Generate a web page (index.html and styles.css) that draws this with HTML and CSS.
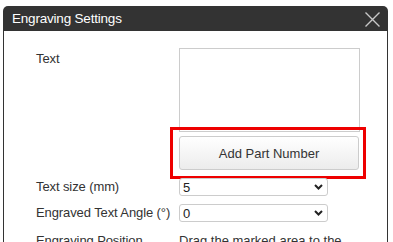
FILE: index.html
```html
<!DOCTYPE html>
<html lang="en">
  <head>
    <meta charset="UTF-8" />
    <title>Engraving Settings</title>
    <link rel="stylesheet" href="styles.css">
  </head>
  <body>
    <div class="dialog">
      <!-- title bar -->
      <div class="dialog-title">
        <span>Engraving Settings</span>
        <svg class="close" width="15" height="15" viewBox="0 0 15 15">
          <path d="M0.5 0.5 L14.5 14.5 M14.5 0.5 L0.5 14.5" stroke="#c8c8c8" stroke-width="1.4" fill="none" />
        </svg>
      </div>

      <div class="dialog-body">
        <div class="row row-top">
          <label class="label">Text</label>
          <div class="field">
            <textarea class="text-input"></textarea>
            <div class="btn-wrap">
              <button class="btn">Add Part Number</button>
              <div class="highlight"></div>
            </div>
          </div>
        </div>

        <div class="row">
          <label class="label">Text size (mm)</label>
          <div class="select-wrap">
            <select class="select"><option>5</option></select>
            <svg class="chevron" width="9" height="6" viewBox="0 0 9 6">
              <path d="M1 1 L4.5 4.5 L8 1" stroke="#222" stroke-width="2" fill="none" />
            </svg>
          </div>
        </div>

        <div class="row">
          <label class="label">Engraved Text Angle (°)</label>
          <div class="select-wrap">
            <select class="select"><option>0</option></select>
            <svg class="chevron" width="9" height="6" viewBox="0 0 9 6">
              <path d="M1 1 L4.5 4.5 L8 1" stroke="#222" stroke-width="2" fill="none" />
            </svg>
          </div>
        </div>

        <div class="row row-top">
          <label class="label">Engraving Position</label>
          <p class="hint">Drag the marked area to the desired position on the part.</p>
        </div>
      </div>
    </div>
  </body>
</html>
```

FILE: styles.css
```css
body {
  margin: 0;
  background: #ffffff;
  font-family: "Liberation Sans", Arial, sans-serif;
  font-size: 13px;
  color: #333333;
}

/* dialog frame */
.dialog {
  margin: 6px 0 0 3px;
  width: 385px;
}

.dialog-title {
  height: 25px;
  background: #333333;
  border-radius: 5px 5px 0 0;
  color: #ffffff;
  display: flex;
  align-items: center;
  justify-content: space-between;
  padding: 0 8px 0 9px;
}

.dialog-title span {
  font-size: 13.5px;
  letter-spacing: -0.2px;
}

.close {
  display: block;
  margin-top: 1px;
}

.dialog-body {
  border-left: 1px solid #333333;
  border-right: 1px solid #333333;
  padding: 17px 28px 20px 32px;
  display: flex;
  flex-direction: column;
  gap: 8px;
}

/* form rows */
.row {
  display: grid;
  grid-template-columns: 143px 181px;
  align-items: center;
}

.row-top {
  align-items: start;
}

.label {
  line-height: 18px;
  white-space: nowrap;
  letter-spacing: -0.1px;
}

.row-top .label {
  margin-top: 2px;
}

.field {
  display: flex;
  flex-direction: column;
  gap: 4px;
}

.text-input {
  display: block;
  box-sizing: border-box;
  width: 181px;
  height: 84px;
  margin: 0;
  border: 1px solid #cccccc;
  resize: none;
}

.btn-wrap {
  position: relative;
}

.btn {
  display: block;
  width: 180px;
  height: 34px;
  border: 1px solid #cccccc;
  border-radius: 3px;
  background: linear-gradient(#ffffff, #ececec);
  font-family: inherit;
  font-size: 13px;
  color: #333333;
}

/* red annotation box around the button */
.highlight {
  position: absolute;
  left: -9px;
  top: -9px;
  width: 190px;
  height: 46px;
  border: 3px solid #ee0000;
}

.select-wrap {
  position: relative;
  width: 149px;
}

.select {
  display: block;
  width: 149px;
  height: 18px;
  appearance: none;
  border: 1px solid #cccccc;
  border-radius: 3px;
  background: #ffffff;
  padding: 0 0 0 3px;
  font-family: inherit;
  font-size: 13px;
  color: #222222;
}

.chevron {
  position: absolute;
  right: 5px;
  top: 6px;
}

.hint {
  margin: 2px 0 0 0;
  line-height: 18px;
}
```
